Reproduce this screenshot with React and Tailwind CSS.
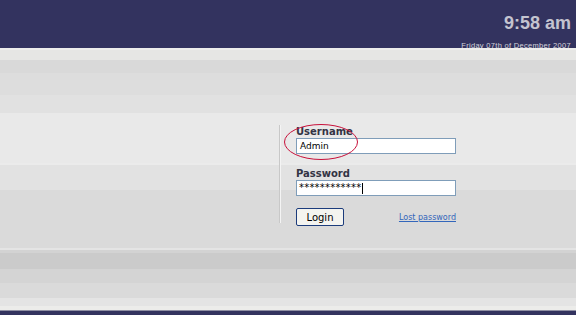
export default function App() {
  const bands =
    "linear-gradient(to bottom, #eeeeec 0px, #eeeeec 2px, #e6e6e4 2px, #e6e6e4 12px, #d9d9d9 12px, #d9d9d9 25px, #dddddd 25px, #dddddd 47px, #e1e1e1 47px, #e1e1e1 65px, #e9e9e9 65px, #e9e9e9 115px, #ebebeb 115px, #ebebeb 117px, #e2e2e2 117px, #e2e2e2 142px, #dadada 142px, #dadada 200px, #e4e4e4 200px, #e4e4e4 202px, #d3d3d3 202px, #d3d3d3 205px, #cbcbcb 205px, #cbcbcb 221px, #d4d4d4 221px, #d4d4d4 235px, #dadada 235px, #dadada 250px, #e4e4e4 250px, #e4e4e4 258px, #ececea 258px, #ececea 262px, #9090a4 262px, #9090a4 263px)";
  return (
    <div className="w-[576px] h-[315px] overflow-hidden flex flex-col font-['Liberation_Sans',Arial,sans-serif]">
      <div className="h-[48px] bg-[#33335f] flex flex-col items-end pr-[5px] pt-[13px]">
        <div className="text-[18px] leading-[20px] font-bold text-[#c4c4d0]">9:58 am</div>
        <div className="mt-[8px] text-[7.5px] leading-[9px] text-[#d4d4dc] tracking-[0.3px]">
          Friday 07th of December 2007
        </div>
      </div>
      <div className="h-[263px] flex justify-start" style={{ backgroundImage: bands }}>
        <div className="ml-[279px] mt-[77px] h-[98px] w-[2px] bg-[#c8c8c8] border-r border-[#f4f4f4]" />
        <div className="ml-[15px] mt-[78px] relative w-[162px] font-['DejaVu_Sans',Tahoma,sans-serif]">
          <div className="text-[10px] leading-[11px] font-bold text-[#333344]">Username</div>
          <div className="mt-[1px] h-[16px] w-[160px] bg-white border border-[#7f9db9] pl-[3px] text-[9px] leading-[14px] text-black">
            Admin
          </div>
          <div className="mt-[14px] text-[10px] leading-[11px] font-bold text-[#333344]">Password</div>
          <div className="mt-[1px] h-[16px] w-[160px] bg-white border border-[#7f9db9] pl-[2px] text-[10px] leading-[16px] text-black flex items-center">
            <span className="tracking-[0.2px]">************</span>
            <span className="ml-px h-[11px] w-px bg-black" />
          </div>
          <div className="mt-[12px] flex items-center justify-between">
            <div className="h-[18px] w-[48px] border border-[#1c3c7c] bg-[#f4f4f0] flex items-center justify-center text-[10px] text-black rounded-[2px]">
              Login
            </div>
            <div className="text-[8px] text-[#3366bb] underline mr-[2px] mt-[2px]">Lost password</div>
          </div>
          <svg className="absolute left-[-13px] top-[-3px]" width="76" height="38" viewBox="0 0 76 38">
            <ellipse cx="38" cy="19" rx="36.5" ry="17.5" fill="none" stroke="#c8103a" strokeWidth="1" />
          </svg>
        </div>
      </div>
      <div className="h-[4px] bg-[#33335f]" />
    </div>
  );
}
